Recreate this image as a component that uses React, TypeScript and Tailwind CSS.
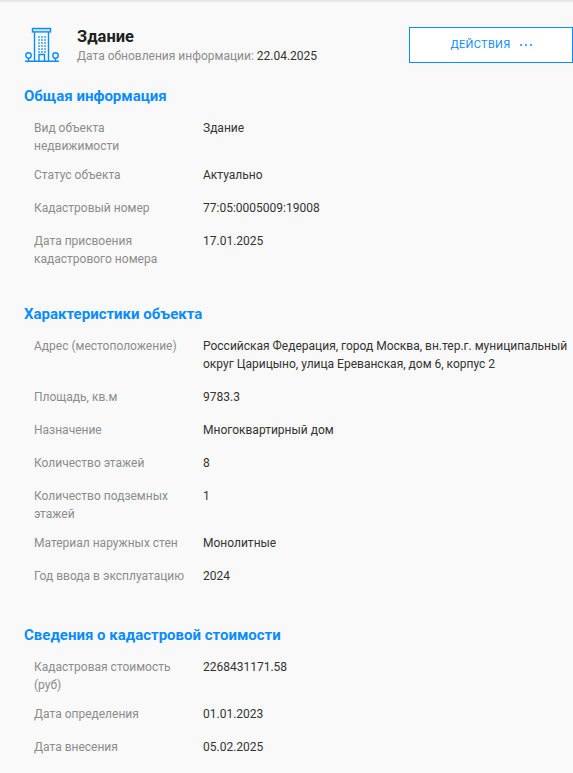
import React from 'react';

type Row = { label: string; value: string };

const sections: { title: string; rows: Row[] }[] = [
  {
    title: 'Общая информация',
    rows: [
      { label: 'Вид объекта недвижимости', value: 'Здание' },
      { label: 'Статус объекта', value: 'Актуально' },
      { label: 'Кадастровый номер', value: '77:05:0005009:19008' },
      { label: 'Дата присвоения кадастрового номера', value: '17.01.2025' },
    ],
  },
  {
    title: 'Характеристики объекта',
    rows: [
      {
        label: 'Адрес (местоположение)',
        value: 'Российская Федерация, город Москва, вн.тер.г. муниципальный округ Царицыно, улица Ереванская, дом 6, корпус 2',
      },
      { label: 'Площадь, кв.м', value: '9783.3' },
      { label: 'Назначение', value: 'Многоквартирный дом' },
      { label: 'Количество этажей', value: '8' },
      { label: 'Количество подземных этажей', value: '1' },
      { label: 'Материал наружных стен', value: 'Монолитные' },
      { label: 'Год ввода в эксплуатацию', value: '2024' },
    ],
  },
  {
    title: 'Сведения о кадастровой стоимости',
    rows: [
      { label: 'Кадастровая стоимость (руб)', value: '2268431171.58' },
      { label: 'Дата определения', value: '01.01.2023' },
      { label: 'Дата внесения', value: '05.02.2025' },
    ],
  },
];

function BuildingIcon() {
  return (
    <svg width="36" height="36" viewBox="0 0 36 36" fill="none" stroke="#0a8cff" strokeWidth="1.4">
      <rect x="8.5" y="1.5" width="18" height="3.4" fill="#cfe6fb" />
      <path d="M10.5 5V34M24.5 5V34" />
      <path d="M1 34.3H35" strokeWidth="1.4" />
      <path d="M15 34V27.5H20.5V34" />
      <g fill="#6db8fb" stroke="none">
        {[9, 12, 15, 18, 21, 24].map(y =>
          [14, 17, 20].map(x => <rect key={`${x}-${y}`} x={x} y={y} width="2" height="2" />),
        )}
      </g>
      <circle cx="4.5" cy="28.5" r="2.7" />
      <circle cx="31.5" cy="28.5" r="2.7" />
      <path d="M4.5 31.2V34M31.5 31.2V34" />
    </svg>
  );
}

export default function App() {
  return (
    <div className="w-[573px] h-[773px] overflow-hidden bg-[#f9f9f9] border-t-2 border-[#e6e6e6] font-['Roboto',sans-serif]">
      <header className="flex items-start pl-6 pt-[25px] h-[84px]">
        <div className="w-[53px] shrink-0">
          <BuildingIcon />
        </div>
        <div className="w-[332px] shrink-0">
          <h1 className="text-[16.5px] leading-[19px] mb-[1px] font-bold text-[#212121]">Здание</h1>
          <p className="text-[12px] leading-[18px] text-[#8c8c8c]">
            Дата обновления информации: <span className="text-[#333333]">22.04.2025</span>
          </p>
        </div>
        <button className="w-[164px] h-[36px] shrink-0 flex items-center justify-center gap-[9px] bg-white border border-[#0a8cff] text-[11px] text-[#0a8cff] tracking-[0.3px]">
          ДЕЙСТВИЯ
          <span className="flex gap-[3px]">
            <i className="w-[2px] h-[2px] rounded-full bg-[#0a8cff]" />
            <i className="w-[2px] h-[2px] rounded-full bg-[#0a8cff]" />
            <i className="w-[2px] h-[2px] rounded-full bg-[#0a8cff]" />
          </span>
        </button>
      </header>

      <main className="pl-6">
        {sections.map(section => (
          <section key={section.title} className="mb-[25px]">
            <h2 className="text-[15px] leading-[20px] font-bold text-[#0a8cff] mb-[13px]">{section.title}</h2>
            {section.rows.map(row => (
              <div key={row.label} className="flex pl-[10px] text-[12px] leading-[18px]">
                <div className="w-[169px] shrink-0 pr-[14px] pb-[11px] text-[#8c8c8c]">{row.label}</div>
                <div className="flex-1 pb-[15px] text-[#333333]">{row.value}</div>
              </div>
            ))}
          </section>
        ))}
      </main>
    </div>
  );
}
